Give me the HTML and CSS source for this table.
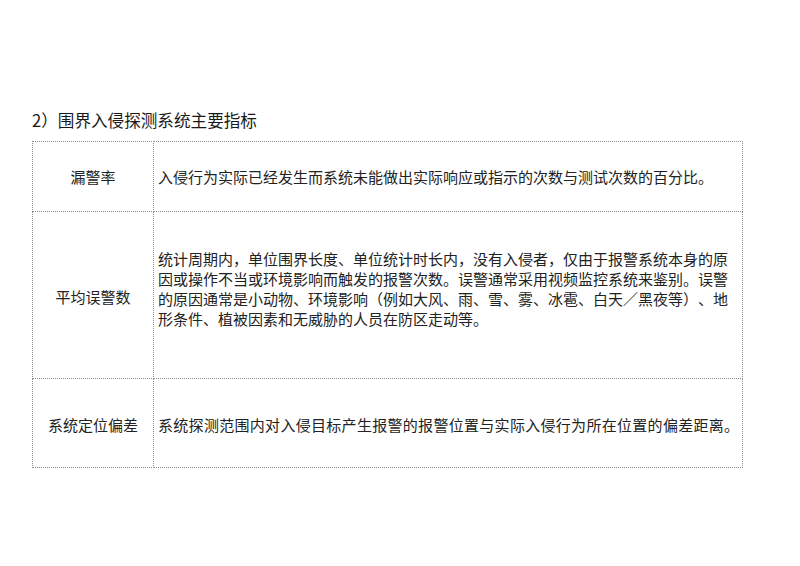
FILE: index.html
```html
<!DOCTYPE html>
<html lang="zh-CN">
<head>
<meta charset="utf-8">
<title>围界入侵探测系统主要指标</title>
<link rel="stylesheet" href="styles.css">
</head>
<body>
<div class="page">
  <h2 class="title">2）围界入侵探测系统主要指标</h2>
  <table class="spec">
    <colgroup>
      <col class="col-name">
      <col class="col-desc">
    </colgroup>
    <tbody>
      <tr class="row-1">
        <td class="name">漏警率</td>
        <td class="desc">入侵行为实际已经发生而系统未能做出实际响应或指示的次数与测试次数的百分比。</td>
      </tr>
      <tr class="row-2">
        <td class="name">平均误警数</td>
        <td class="desc">统计周期内，单位围界长度、单位统计时长内，没有入侵者，仅由于报警系统本身的原因或操作不当或环境影响而触发的报警次数。误警通常采用视频监控系统来鉴别。误警的原因通常是小动物、环境影响（例如大风、雨、雪、雾、冰雹、白天／黑夜等）、地形条件、植被因素和无威胁的人员在防区走动等。</td>
      </tr>
      <tr class="row-3">
        <td class="name">系统定位偏差</td>
        <td class="desc wide">系统探测范围内对入侵目标产生报警的报警位置与实际入侵行为所在位置的偏差距离。</td>
      </tr>
    </tbody>
  </table>
</div>
</body>
</html>
```
FILE: styles.css
```css
html, body {
  margin: 0;
  padding: 0;
  background: #ffffff;
}

body {
  font-family: "Noto Sans CJK SC", "Microsoft YaHei", sans-serif;
  color: #222222;
  text-spacing-trim: space-all;
  font-feature-settings: "chws" 0, "halt" 0, "palt" 0, "vchw" 0;
}

.page {
  padding: 108px 0 0 32px;
}

.title {
  margin: 0 0 9px 0;
  font-size: 16.6px;
  font-weight: 400;
  line-height: 24px;
  color: #1a1a1a;
}

.spec {
  border-collapse: collapse;
  width: 711px;
  table-layout: fixed;
  font-size: 15px;
  line-height: 20px;
}

.col-name {
  width: 121px;
}

.spec td {
  border: 1px dotted #8c8c8c;
  vertical-align: middle;
  padding: 0;
}

.spec .name {
  text-align: center;
}

.spec .desc {
  padding: 0 6px 0 4px;
  text-align: left;
}

.spec .wide {
  letter-spacing: 0.3px;
  white-space: nowrap;
}

.row-1 {
  height: 70px;
}

.row-2 {
  height: 167px;
}

.row-2 .name {
  padding-top: 3px;
}

.row-2 .desc {
  padding-bottom: 13px;
}

.row-3 {
  height: 89px;
}

.row-3 .name,
.row-3 .desc {
  padding-top: 4px;
}
```
